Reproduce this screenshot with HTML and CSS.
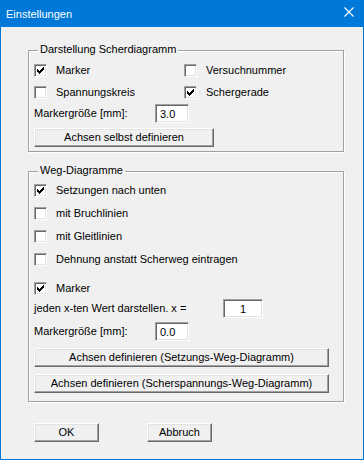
FILE: index.html
```html
<!DOCTYPE html>
<html lang="de">
<head>
    <meta charset="UTF-8">
    <title>Einstellungen</title>
    <link rel="stylesheet" href="styles.css">
</head>
<body>
    <div class="window">
        <div class="titlebar">
            <span class="title">Einstellungen</span>
            <svg class="close" width="10" height="10" viewBox="0 0 10 10">
                <path d="M0.5 0.5 L9.5 9.5 M9.5 0.5 L0.5 9.5" stroke="#fff" stroke-width="1.1" fill="none"/>
            </svg>
        </div>

        <div class="client">
            <div class="group">
                <div class="group-title">Darstellung Scherdiagramm</div>
                <div class="check-grid">
                    <div class="check"><span class="box checked"></span>Marker</div>
                    <div class="check"><span class="box"></span>Versuchnummer</div>
                    <div class="check"><span class="box"></span>Spannungskreis</div>
                    <div class="check"><span class="box checked"></span>Schergerade</div>
                </div>
                <div class="field field-first">
                    <span class="field-label">Markergröße [mm]:</span>
                    <input class="edit" type="text" value="3.0">
                </div>
                <button class="btn btn-scher">Achsen selbst definieren</button>
            </div>

            <div class="group group-weg">
                <div class="group-title">Weg-Diagramme</div>
                <div class="check-list">
                    <div class="check"><span class="box checked"></span>Setzungen nach unten</div>
                    <div class="check"><span class="box"></span>mit Bruchlinien</div>
                    <div class="check"><span class="box"></span>mit Gleitlinien</div>
                    <div class="check"><span class="box"></span>Dehnung anstatt Scherweg eintragen</div>
                </div>
                <div class="check check-marker"><span class="box checked"></span>Marker</div>
                <div class="field field-first">
                    <span class="field-label label-long">jeden x-ten Wert darstellen. x =</span>
                    <input class="edit edit-wide" type="text" value="1">
                </div>
                <div class="field">
                    <span class="field-label">Markergröße [mm]:</span>
                    <input class="edit" type="text" value="0.0">
                </div>
                <button class="btn btn-weg">Achsen definieren (Setzungs-Weg-Diagramm)</button>
                <button class="btn btn-weg">Achsen definieren (Scherspannungs-Weg-Diagramm)</button>
            </div>

            <div class="dialog-buttons">
                <button class="btn btn-small">OK</button>
                <button class="btn btn-small">Abbruch</button>
            </div>
        </div>
    </div>
</body>
</html>
```

FILE: styles.css
```css
body {
    margin: 0;
    background-color: #fff;
    font-family: 'Liberation Sans', Arial, sans-serif;
    font-size: 11px;
    line-height: 13px;
    color: #000;
}

.window {
    box-sizing: border-box;
    width: 364px;
    height: 460px;
    border: 1px solid #0078d7;
    background-color: #f0f0f0;
    display: flex;
    flex-direction: column;
}

.titlebar {
    height: 26px;
    background-color: #0078d7;
    display: flex;
    align-items: center;
    justify-content: space-between;
    padding: 0 9px 0 5px;
    flex-shrink: 0;
}

.title {
    color: #fff;
}

.close {
    display: block;
    margin-top: -4px;
}

.client {
    padding: 23px 0 0 27px;
}

/* group boxes with etched frame */
.group {
    box-sizing: border-box;
    width: 316px;
    border: 1px solid #a0a0a0;
    box-shadow: inset 1px 1px 0 #fff, 1px 1px 0 #fff;
    padding: 0 5px 4px 5px;
    display: flex;
    flex-direction: column;
    align-items: flex-start;
}

.group-weg {
    margin-top: 19px;
    padding-bottom: 8px;
}

.group-title {
    margin: -8px 0 0 4px;
    padding: 0 2px;
    background-color: #f0f0f0;
}

.check-grid {
    display: grid;
    grid-template-columns: 150px auto;
    row-gap: 9px;
    margin-top: 8px;
}

.check-list {
    display: flex;
    flex-direction: column;
    gap: 10px;
    margin-top: 7px;
}

.check {
    display: flex;
    align-items: center;
    height: 13px;
    white-space: nowrap;
}

.check-marker {
    margin-top: 16px;
}

.box {
    box-sizing: border-box;
    width: 13px;
    height: 13px;
    margin-right: 9px;
    background-color: #fff;
    border: 1px solid;
    border-color: #a0a0a0 #fff #fff #a0a0a0;
    box-shadow: inset 1px 1px 0 #696969, inset -1px -1px 0 #e3e3e3;
}

.box.checked {
    background-image: url("data:image/svg+xml,%3Csvg xmlns='http://www.w3.org/2000/svg' width='11' height='11' viewBox='0 0 11 11' shape-rendering='crispEdges'%3E%3Cpath d='M2 4h1v3h-1z M3 5h1v3h-1z M4 6h1v3h-1z M5 5h1v3h-1z M6 4h1v3h-1z M7 3h1v3h-1z M8 2h1v3h-1z' fill='%23000'/%3E%3C/svg%3E");
    background-repeat: no-repeat;
}

.field {
    display: flex;
    align-items: center;
    height: 19px;
    margin-top: 4px;
}

.field-first {
    margin-top: 5px;
}

.group-weg .field-first {
    margin-top: 4px;
}

.field-label {
    width: 121px;
    white-space: nowrap;
}

.label-long {
    width: 189px;
}

.edit {
    box-sizing: border-box;
    width: 34px;
    height: 19px;
    margin: 0;
    padding: 0 0 0 4px;
    font: inherit;
    background-color: #fff;
    border: 1px solid;
    border-color: #a0a0a0 #fff #fff #a0a0a0;
    box-shadow: inset 1px 1px 0 #696969, inset -1px -1px 0 #e3e3e3;
    outline: none;
}

.edit-wide {
    width: 40px;
    padding: 0;
    text-align: center;
}

/* raised push buttons */
.btn {
    box-sizing: border-box;
    height: 19px;
    margin: 0;
    padding: 0;
    font: inherit;
    color: #000;
    background-color: #f0f0f0;
    border: 1px solid;
    border-color: #fff #696969 #696969 #fff;
    box-shadow: inset -1px -1px 0 #a0a0a0, inset 1px 1px 0 #e3e3e3;
}

.btn-scher {
    width: 180px;
    margin-top: 5px;
}

.btn-weg {
    width: 295px;
    margin-top: 7px;
}

.dialog-buttons {
    display: flex;
    gap: 48px;
    margin: 21px 0 0 6px;
}

.btn-small {
    width: 65px;
}
```
